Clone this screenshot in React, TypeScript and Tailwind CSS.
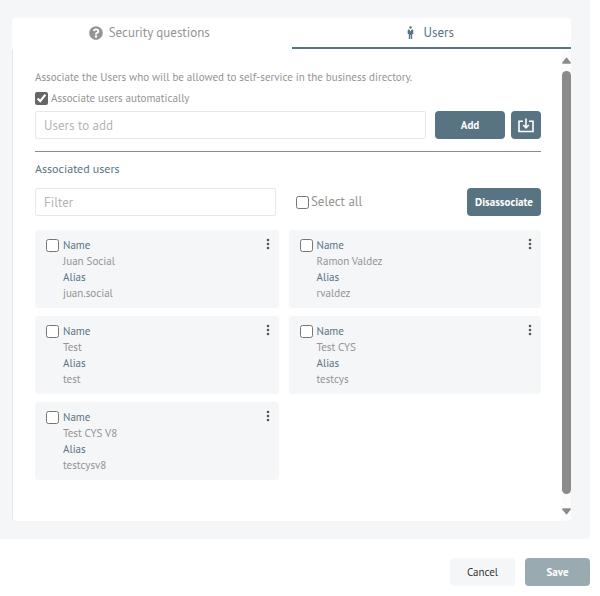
import { useState } from 'react';
import { FaQuestionCircle } from 'react-icons/fa';
import { clsx } from 'clsx';

interface DirectoryUser {
  name: string;
  alias: string;
}

const USERS: DirectoryUser[] = [
  { name: 'Juan Social', alias: 'juan.social' },
  { name: 'Ramon Valdez', alias: 'rvaldez' },
  { name: 'Test', alias: 'test' },
  { name: 'Test CYS', alias: 'testcys' },
  { name: 'Test CYS V8', alias: 'testcysv8' },
];

export default function App() {
  const [automatic, setAutomatic] = useState(true);
  const [selected, setSelected] = useState<string[]>([]);

  const allSelected = selected.length === USERS.length;

  const toggleUser = (alias: string) => {
    setSelected((prev) =>
      prev.includes(alias) ? prev.filter((a) => a !== alias) : [...prev, alias]
    );
  };

  return (
    <div className="bg-white pr-[10px] font-['PT_Sans','Noto_Sans',sans-serif] text-[11px] leading-4 text-[#949494]">
      <main className="rounded-br-sm bg-[#f5f6f8] pt-[18px] pr-[19px] pb-[18px] pl-3">
        <div role="tablist" className="grid grid-cols-2 rounded-t-sm bg-white text-[13px]">
          <Tab label="Security questions" icon={<FaQuestionCircle size={14} />} />
          <Tab label="Users" icon={<PersonIcon />} active />
        </div>

        <div className="flex rounded-b-sm border-l border-[#e8e8e8] bg-white">
          <section className="min-w-0 flex-1 pt-5 pr-5 pb-[41px] pl-[22px]">
            <p>Associate the Users who will be allowed to self-service in the business directory.</p>

            <label className="mt-[5px] flex items-center gap-[3px]">
              <input
                type="checkbox"
                checked={automatic}
                onChange={() => setAutomatic(!automatic)}
                className="size-[13px] accent-[#666]"
              />
              Associate users automatically
            </label>

            <div className="mt-[5px] flex">
              <input
                type="text"
                aria-label="Users to add"
                placeholder="Users to add"
                className="h-7 min-w-0 flex-1 rounded-xs border border-[#e8e8e8] px-2 text-[13px] placeholder:text-[#b5b5b5]"
              />
              <button className="ml-[9px] h-7 w-[70px] rounded-sm bg-[#587482] font-semibold text-white">
                Add
              </button>
              <button
                aria-label="Import users"
                className="ml-[6px] flex h-7 w-[30px] items-center justify-center rounded-sm bg-[#587482] text-white"
              >
                <ImportIcon />
              </button>
            </div>

            <hr className="mt-[12px] border-[#8c8c8c]" />

            <h2 className="mt-[9px] text-xs leading-4 text-[#587482]">Associated users</h2>

            <div className="mt-[11px] flex items-center">
              <input
                type="text"
                aria-label="Filter"
                placeholder="Filter"
                className="h-7 w-[calc(48%-2px)] rounded-xs border border-[#e8e8e8] px-2 text-[13px] placeholder:text-[#b5b5b5]"
              />
              <label className="ml-5 flex items-center gap-[2px] text-[13px]">
                <input
                  type="checkbox"
                  checked={allSelected}
                  onChange={() => setSelected(allSelected ? [] : USERS.map((u) => u.alias))}
                  className="size-[13px] accent-[#666]"
                />
                Select all
              </label>
              <button className="ml-auto h-7 w-[74px] rounded-sm bg-[#587482] font-semibold text-white">
                Disassociate
              </button>
            </div>

            <div className="mt-[14px] grid grid-cols-[244fr_253fr] gap-x-[10px] gap-y-2">
              {USERS.map((user) => (
                <UserCard
                  key={user.alias}
                  user={user}
                  checked={selected.includes(user.alias)}
                  onToggle={() => toggleUser(user.alias)}
                />
              ))}
            </div>
          </section>

          <ScrollTrack />
        </div>
      </main>

      <footer className="flex justify-end gap-[10px] pt-[19px]">
        <button className="h-7 w-[65px] rounded-sm bg-[#f5f6f8] font-medium text-[#333]">Cancel</button>
        <button className="h-7 w-[65px] rounded-sm bg-[#9aaab1] font-semibold text-white">Save</button>
      </footer>
    </div>
  );
}

function Tab({ label, icon, active }: { label: string; icon: React.ReactNode; active?: boolean }) {
  return (
    <button
      role="tab"
      aria-selected={!!active}
      className={clsx(
        'flex h-[31px] items-center justify-center gap-[6px] border-b-2 pr-[5px]',
        active ? 'border-[#587482] text-[#587482]' : 'border-transparent'
      )}
    >
      <span className="flex w-[14px] justify-center">{icon}</span>
      {label}
    </button>
  );
}

function UserCard({
  user,
  checked,
  onToggle,
}: {
  user: DirectoryUser;
  checked: boolean;
  onToggle: () => void;
}) {
  return (
    <article className="flex items-start rounded-sm bg-[#f5f6f8] py-[7px] pr-2 pl-[11px]">
      <input
        type="checkbox"
        aria-label={`Select ${user.name}`}
        checked={checked}
        onChange={onToggle}
        className="mt-[2px] size-[13px] accent-[#666]"
      />
      <dl className="ml-1 flex-1">
        <dt className="font-medium text-[#587482]">Name</dt>
        <dd>{user.name}</dd>
        <dt className="font-medium text-[#587482]">Alias</dt>
        <dd>{user.alias}</dd>
      </dl>
      <button aria-label={`Options for ${user.name}`} className="flex h-[14px] w-[6px] items-center justify-center text-[#555]">
        <svg width="4" height="12" viewBox="0 0 4 12" fill="currentColor">
          <circle cx="2" cy="2" r="1.3" />
          <circle cx="2" cy="6" r="1.3" />
          <circle cx="2" cy="10" r="1.3" />
        </svg>
      </button>
    </article>
  );
}

function ScrollTrack() {
  return (
    <div aria-hidden="true" className="flex w-[10px] flex-col items-end rounded-br-sm bg-[#fcfcfc] pt-2 pb-[6px] text-[#8b8b8b]">
      <svg width="9" height="7" viewBox="0 0 9 7" fill="currentColor">
        <path d="M4.5 0.3 L8.8 5.6 Q9 6.8 8 6.8 H1 Q0 6.8 0.2 5.6 Z" />
      </svg>
      <div className="mt-[7px] mb-[14px] w-[9px] flex-1 rounded-full bg-[#8b8b8b]" />
      <svg width="9" height="7" viewBox="0 0 9 7" fill="currentColor">
        <path d="M4.5 6.7 L8.8 1.4 Q9 0.2 8 0.2 H1 Q0 0.2 0.2 1.4 Z" />
      </svg>
    </div>
  );
}

function PersonIcon() {
  return (
    <svg width="7" height="14" viewBox="0 0 7 14" fill="currentColor">
      <circle cx="3.5" cy="1.5" r="1.2" />
      <path d="M1.6 3.4 H2.4 L3.5 5.6 L4.6 3.4 H5.4 Q6.3 3.4 6.3 4.6 V8 H5.2 V13 H3.8 V9 H3.2 V13 H1.8 V8 H0.7 V4.6 Q0.7 3.4 1.6 3.4 Z" />
    </svg>
  );
}

function ImportIcon() {
  return (
    <svg width="16" height="15" viewBox="0 0 16 15" fill="none" stroke="currentColor" strokeWidth="1.6">
      <path d="M5 3.2 H1 V13.5 H15 V3.2 H11" />
      <path d="M8 0.5 V9.5" />
      <path d="M5.2 7 L8 9.8 L10.8 7" />
    </svg>
  );
}
